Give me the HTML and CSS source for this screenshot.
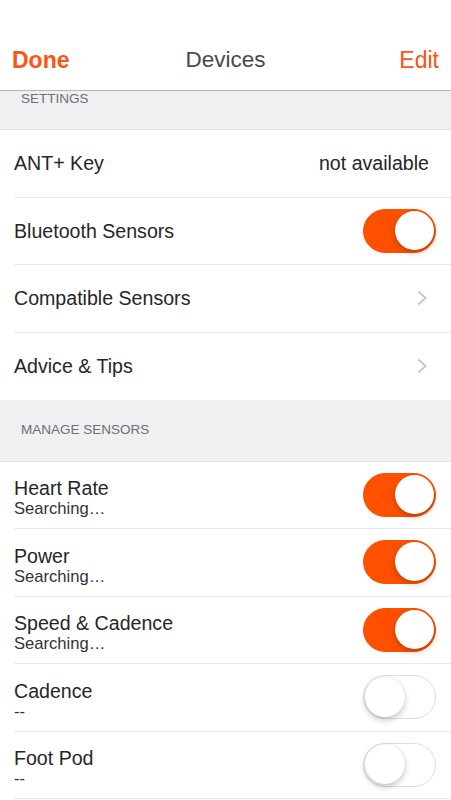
FILE: index.html
```html
<!DOCTYPE html>
<html>
<head>
<meta charset="utf-8">
<link rel="stylesheet" href="styles.css">
</head>
<body>
<div class="screen">
  <header class="nav">
    <span class="nav-btn done">Done</span>
    <span class="nav-title">Devices</span>
    <span class="nav-btn edit">Edit</span>
  </header>

  <div class="section-head top">SETTINGS</div>
  <ul class="group">
    <li class="row">
      <span class="label">ANT+ Key</span>
      <span class="value">not available</span>
    </li>
    <li class="row">
      <span class="label">Bluetooth Sensors</span>
      <span class="switch on"><span class="knob"></span></span>
    </li>
    <li class="row">
      <span class="label">Compatible Sensors</span>
      <svg class="chev" width="11" height="16" viewBox="0 0 11 16"><path d="M1.5 1.5 L8.5 8 L1.5 14.5" fill="none" stroke="#c7c7cc" stroke-width="2"/></svg>
    </li>
    <li class="row">
      <span class="label">Advice &amp; Tips</span>
      <svg class="chev" width="11" height="16" viewBox="0 0 11 16"><path d="M1.5 1.5 L8.5 8 L1.5 14.5" fill="none" stroke="#c7c7cc" stroke-width="2"/></svg>
    </li>
  </ul>

  <div class="section-head manage">MANAGE SENSORS</div>
  <ul class="group">
    <li class="row two">
      <div class="texts"><span class="label">Heart Rate</span><span class="sub">Searching…</span></div>
      <span class="switch on"><span class="knob"></span></span>
    </li>
    <li class="row two">
      <div class="texts"><span class="label">Power</span><span class="sub">Searching…</span></div>
      <span class="switch on"><span class="knob"></span></span>
    </li>
    <li class="row two">
      <div class="texts"><span class="label">Speed &amp; Cadence</span><span class="sub">Searching…</span></div>
      <span class="switch on"><span class="knob"></span></span>
    </li>
    <li class="row two">
      <div class="texts"><span class="label">Cadence</span><span class="sub">--</span></div>
      <span class="switch"><span class="knob"></span></span>
    </li>
    <li class="row two">
      <div class="texts"><span class="label">Foot Pod</span><span class="sub">--</span></div>
      <span class="switch"><span class="knob"></span></span>
    </li>
  </ul>
</div>
</body>
</html>
```

FILE: styles.css
```css
* { box-sizing: border-box; }
html, body { margin: 0; padding: 0; background: #ffffff; }
body {
  font-family: "Liberation Sans", Arial, sans-serif;
  color: #222222;
  overflow: hidden;
}
.screen { width: 451px; height: 800px; overflow: hidden; }

.nav {
  height: 91px;
  padding: 40px 12px 0 12px;
  display: flex;
  align-items: flex-start;
  justify-content: space-between;
  border-bottom: 1px solid #b4b4b4;
  background: #ffffff;
  position: relative;
}
.nav-btn {
  font-size: 23px;
  line-height: 40px;
  color: #ff5214;
}
.done { font-weight: bold; }
.nav-title {
  font-size: 22.5px;
  line-height: 40px;
  color: #4a4a4a;
  position: absolute;
  left: 0;
  right: 0;
  text-align: center;
  top: 40px;
  pointer-events: none;
}

.section-head {
  background: #f0f0f2;
  color: #6d6d72;
  font-size: 13.5px;
  padding-left: 21px;
}
.section-head.top {
  height: 39px;
  line-height: 16px;
  border-bottom: 1px solid #e6e6e6;
}
.section-head.manage {
  height: 61.5px;
  line-height: 16px;
  padding-top: 22px;
  border-bottom: 1px solid #e6e6e6;
}

.group { list-style: none; margin: 0; padding: 0; background: #ffffff; }
.row {
  height: 67.5px;
  margin-left: 14px;
  padding-right: 15px;
  display: flex;
  align-items: center;
  justify-content: space-between;
  border-bottom: 1px solid #e8e8e8;
}
.group .row:last-child { border-bottom: none; }
.group:last-child .row:last-child { border-bottom: 1px solid #e8e8e8; }
.label { font-size: 19.6px; line-height: 22px; color: #262626; }
.value { font-size: 19.6px; color: #262626; margin-right: 7px; }
.chev { margin-right: 8px; display: block; }

.row.two { padding-top: 6.5px; }
.texts { display: flex; flex-direction: column; }
.sub { font-size: 16.6px; line-height: 20px; color: #333333; }
.row.two .switch { margin-top: -6.5px; }

.switch {
  width: 73px;
  height: 44px;
  border-radius: 22px;
  background: #ffffff;
  border: 1.5px solid #dedede;
  position: relative;
  flex: none;
}
.switch.on { background: #ff5000; border-color: #ff5000; }
.knob {
  position: absolute;
  top: 0.5px;
  left: 0.5px;
  width: 40px;
  height: 40px;
  border-radius: 50%;
  background: #ffffff;
  box-shadow: 0 3px 6px rgba(0,0,0,0.22), 0 0 1px rgba(0,0,0,0.2);
}
.switch.on .knob { left: auto; right: 1px; top: 1px; width: 39px; height: 39px; }
```
